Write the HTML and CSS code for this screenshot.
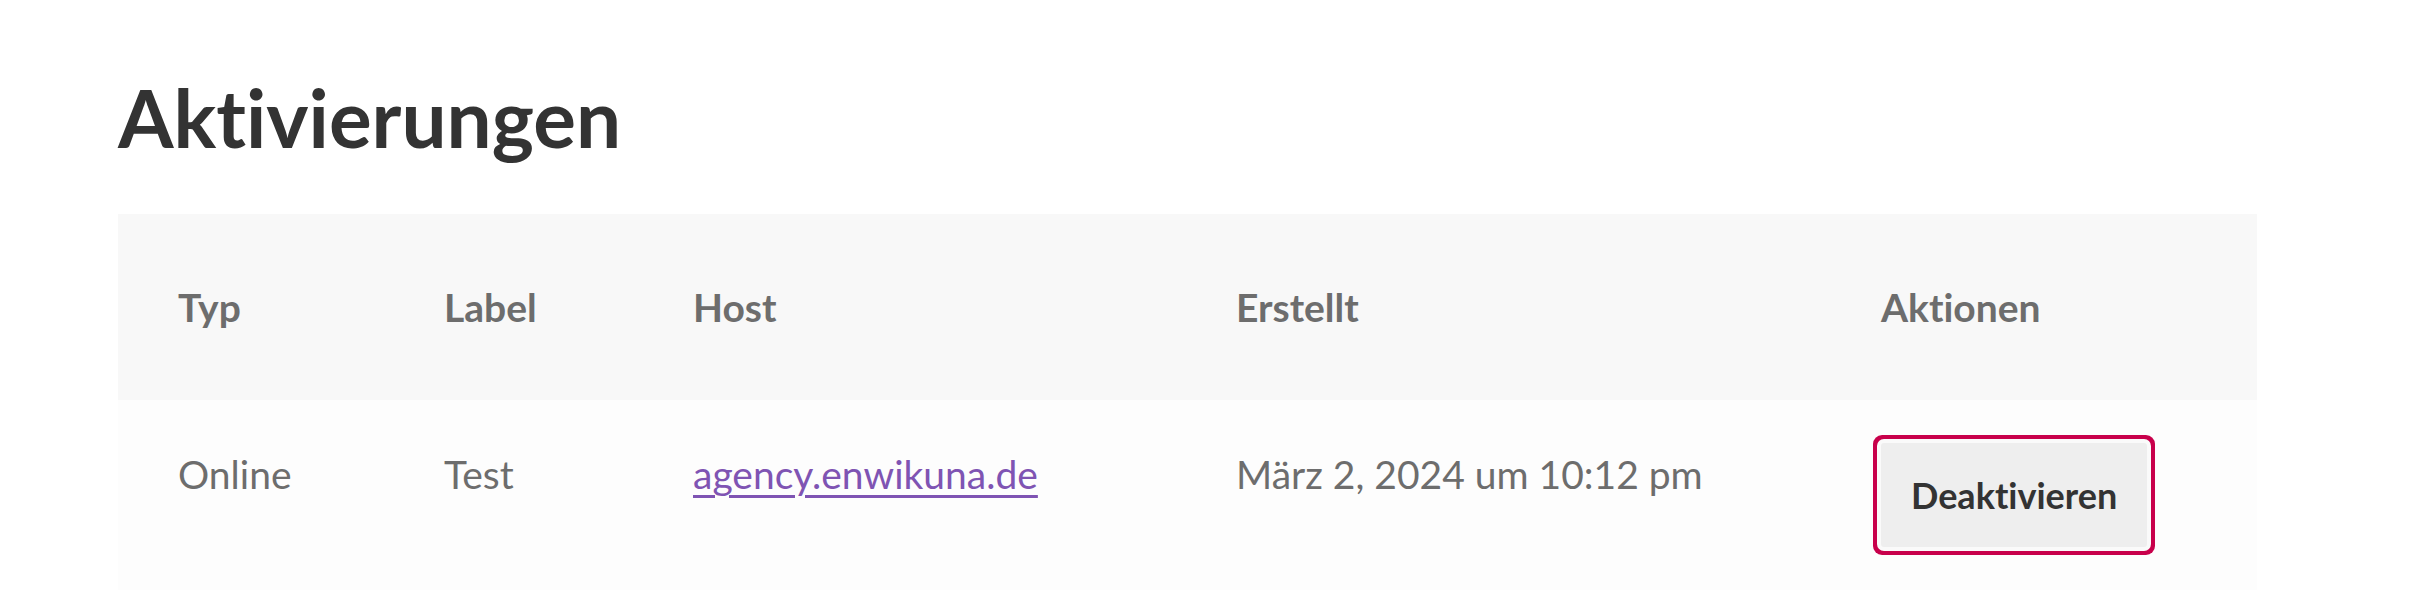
FILE: index.html
```html
<!DOCTYPE html>
<html lang="de">
<head>
<meta charset="utf-8">
<title>Aktivierungen</title>
<link rel="stylesheet" href="styles.css">
</head>
<body>
<main class="page">
  <h1 class="title">Aktivierungen</h1>
  <div class="table">
    <div class="row head">
      <div class="cell">Typ</div>
      <div class="cell">Label</div>
      <div class="cell">Host</div>
      <div class="cell">Erstellt</div>
      <div class="cell">Aktionen</div>
    </div>
    <div class="row body">
      <div class="cell">Online</div>
      <div class="cell">Test</div>
      <div class="cell"><a class="link" href="#">agency.enwikuna.de</a></div>
      <div class="cell">März 2, 2024 um 10:12 pm</div>
      <div class="cell action"><button class="btn" type="button">Deaktivieren</button></div>
    </div>
  </div>
</main>
</body>
</html>
```
FILE: styles.css
```css
html, body {
  margin: 0;
  padding: 0;
  background: #ffffff;
}
body {
  font-family: "Lato", "Liberation Sans", sans-serif;
  font-variant-ligatures: none;
  color: #6d6d6d;
}
.page {
  padding: 0 157px 0 118px;
}
.title {
  margin: 0;
  padding: 69px 0 0 0;
  height: 214px;
  box-sizing: border-box;
  font-size: 80px;
  line-height: 1.2;
  font-weight: 700;
  color: #333333;
}
.table {
  width: 2139px;
}
.row {
  display: grid;
  grid-template-columns: 266px 249px 543px 645px 436px;
}
.head {
  background: #f8f8f8;
  height: 186px;
  align-items: center;
  font-weight: 700;
}
.body {
  background: #fdfdfd;
  height: 190px;
  align-items: start;
}
.cell {
  padding-left: 60px;
  font-size: 39px;
  line-height: 1.2;
}
.body .cell {
  padding-top: 51px;
}
.body .cell.action {
  padding-top: 43px;
}
.link {
  color: #7f54b3;
  text-decoration: underline;
  text-decoration-thickness: 3px;
  text-underline-offset: 6px;
}
.btn {
  font-family: "Lato", "Liberation Sans", sans-serif;
  font-variant-ligatures: none;
  font-size: 36px;
  font-weight: 700;
  color: #333333;
  background: #eeeeee;
  border: 0;
  border-radius: 3px;
  height: 104px;
  padding: 0 30px;
  box-shadow: 0 0 0 4px #fafafa, 0 0 0 8px #c8004b;
  cursor: pointer;
}
```
